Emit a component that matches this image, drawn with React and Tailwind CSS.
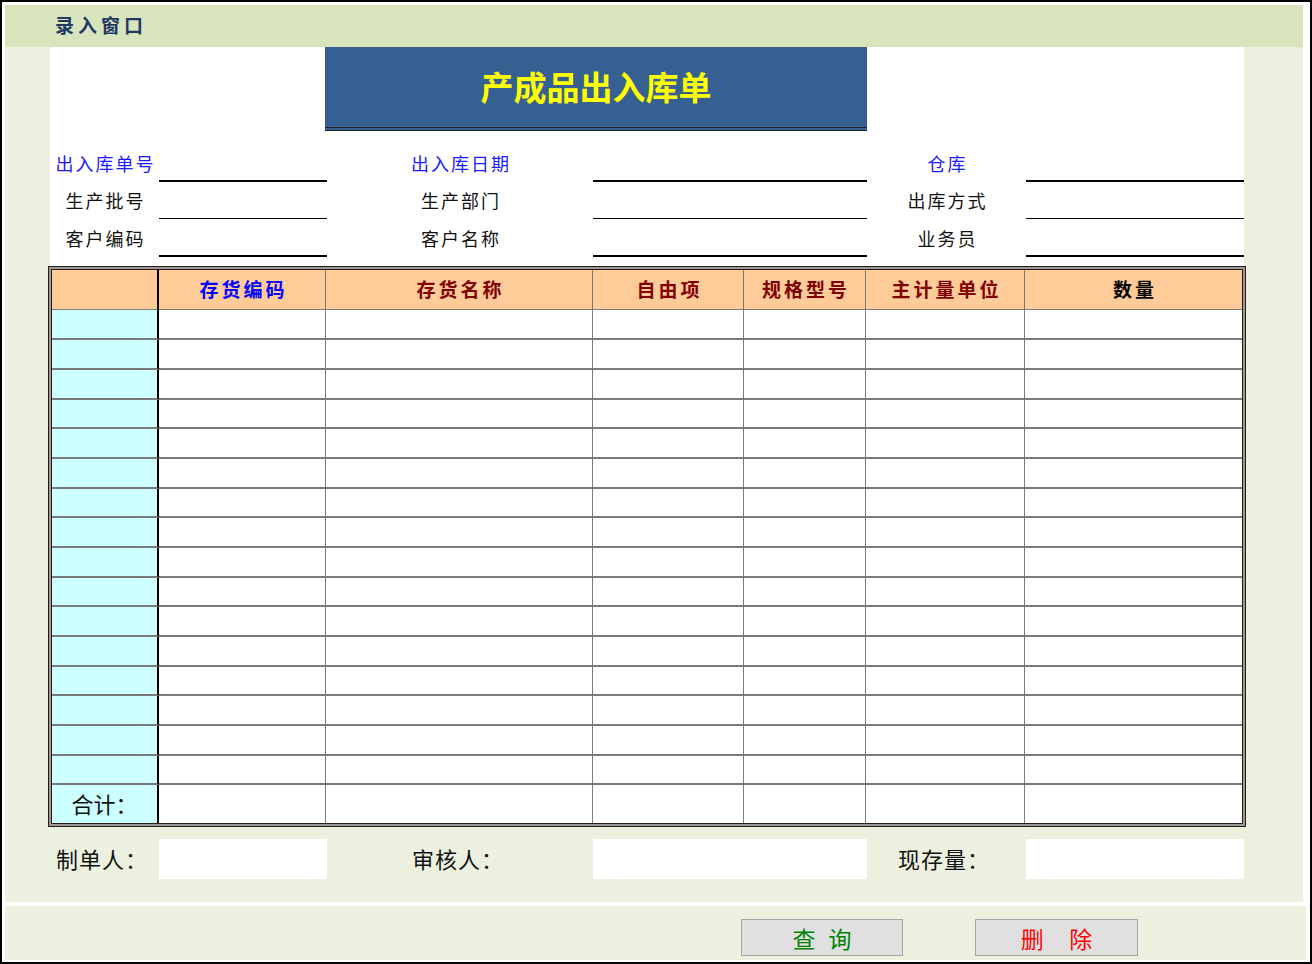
const cjk = "font-['Liberation_Sans','Noto_Sans_CJK_SC',sans-serif]";

const formRows = [
  { h: "h-[51px]", line: "border-b-2", cells: [["出入库单号", true], ["出入库日期", true], ["仓库", true]] },
  { h: "h-[37px]", line: "border-b", cells: [["生产批号", false], ["生产部门", false], ["出库方式", false]] },
  { h: "h-[38px]", line: "border-b-2", cells: [["客户编码", false], ["客户名称", false], ["业务员", false]] },
];

const labelW = ["w-[109px]", "w-[266px]", "w-[159px]"];
const inputW = ["w-[168px]", "w-[274px]", "w-[218px]"];

const headers = [
  ["", ""],
  ["存货编码", "text-[#0000ff]"],
  ["存货名称", "text-[#800000]"],
  ["自由项", "text-[#800000]"],
  ["规格型号", "text-[#800000]"],
  ["主计量单位", "text-[#800000]"],
  ["数量", "text-black"],
];

const rowHeights = [
  "h-[30px]", "h-[30px]", "h-[30px]", "h-[29px]", "h-[30px]", "h-[30px]", "h-[29px]", "h-[30px]",
  "h-[30px]", "h-[29px]", "h-[30px]", "h-[30px]", "h-[29px]", "h-[30px]", "h-[30px]", "h-[29px]",
];

const Cell = ({ idx, h }) => {
  if (idx === 0) {
    return <div className={`${h} bg-[#ccffff] border-b-2 border-[#7a7a7a] border-r-2 border-r-black`} />;
  }
  return (
    <div
      className={`${h} bg-white border-b-2 border-b-[#7a7a7a] ${idx === 6 ? "" : "border-r border-r-[#7a7a7a]"}`}
    />
  );
};

const App = () => {
  return (
    <div className={`w-[1312px] h-[964px] border-2 border-black bg-white p-[3px] ${cjk}`}>
      {/* upper panel */}
      <div className="w-[1298px] h-[897px] bg-[#ebf1de] flex flex-col">
        <div className="h-[42px] bg-[#d8e4bc] flex items-center pl-[50px]">
          <span className="text-[19px] font-bold tracking-[4px] text-[#1f3864] mt-[2px]">录入窗口</span>
        </div>

        {/* sheet */}
        <div className="ml-[45px] w-[1194px] h-[219px] bg-white flex flex-col">
          <div className="ml-[275px] w-[542px] h-[84px] bg-[#366092] border-b-4 border-double border-[#222] flex items-center justify-center">
            <span className="text-[33px] font-bold text-[#ffff00] mt-[4px]">产成品出入库单</span>
          </div>
          {formRows.map((row, ri) => (
            <div key={ri} className={`${row.h} flex items-end`}>
              {row.cells.map(([label, blue], ci) => (
                <div key={ci} className="flex">
                  <div
                    className={`${labelW[ci]} h-[34px] flex items-center justify-center pl-[2px] text-[18px] tracking-[2px] ${
                      blue ? "text-[#1a1aff]" : "text-[#111]"
                    }`}
                  >
                    {label}
                  </div>
                  <div className={`${inputW[ci]} h-[34px] ${row.line} border-black`} />
                </div>
              ))}
            </div>
          ))}
        </div>

        {/* table */}
        <div className="ml-[43px] w-[1198px] border-4 border-double border-[#2a1a10] bg-[#999]">
          <div className="grid grid-cols-[107px_167px_267px_151px_122px_159px_217px]">
            {headers.map(([t, c], i) => (
              <div
                key={i}
                className={`h-[40px] bg-[#ffcc99] border-b border-[#7a7a7a] ${
                  i === 0 ? "border-r-2 border-r-black" : i === 6 ? "" : "border-r"
                } flex items-center justify-center pt-[3px] pl-[3px] text-[19px] font-bold tracking-[3px] ${c}`}
              >
                {t}
              </div>
            ))}
            {rowHeights.map((h, r) => headers.map((_, i) => <Cell key={`${r}-${i}`} idx={i} h={h} />))}
            {headers.map((_, i) =>
              i === 0 ? (
                <div
                  key={`t${i}`}
                  className="h-[38px] bg-[#ccffff] border-r-2 border-r-black flex items-end justify-center pb-[1px] text-[22px] text-[#111]"
                >
                  合计：
                </div>
              ) : (
                <div key={`t${i}`} className={`h-[38px] bg-white ${i === 6 ? "" : "border-r border-[#7a7a7a]"}`} />
              )
            )}
          </div>
        </div>

        {/* signature row */}
        <div className="mt-[12px] ml-[45px] flex items-center h-[40px] text-[22px] text-[#111]">
          <div className="w-[109px] pl-[6px] pt-[2px] tracking-[1px]">制单人：</div>
          <div className="w-[168px] h-[40px] bg-white" />
          <div className="w-[266px] pl-[85px] pt-[2px] tracking-[1px]">审核人：</div>
          <div className="w-[274px] h-[40px] bg-white" />
          <div className="w-[159px] pl-[31px] pt-[2px] tracking-[1px]">现存量：</div>
          <div className="w-[218px] h-[40px] bg-white" />
        </div>
      </div>

      {/* lower panel */}
      <div className="mt-[4px] w-[1301px] h-[54px] bg-[#ebf1de] flex items-start pt-[13px]">
        <button className="ml-[736px] w-[162px] h-[37px] bg-[#e0e0e0] border border-[#a6a6a6] text-[23px] text-[#008000] flex items-center justify-center pt-[6px]">
          查&nbsp;&nbsp;询
        </button>
        <button className="ml-[72px] w-[163px] h-[37px] bg-[#e0e0e0] border border-[#a6a6a6] text-[23px] text-[#ff0000] flex items-center justify-center pt-[6px]">
          删&nbsp;&nbsp;&nbsp;&nbsp;除
        </button>
      </div>
    </div>
  );
};

export default App;
